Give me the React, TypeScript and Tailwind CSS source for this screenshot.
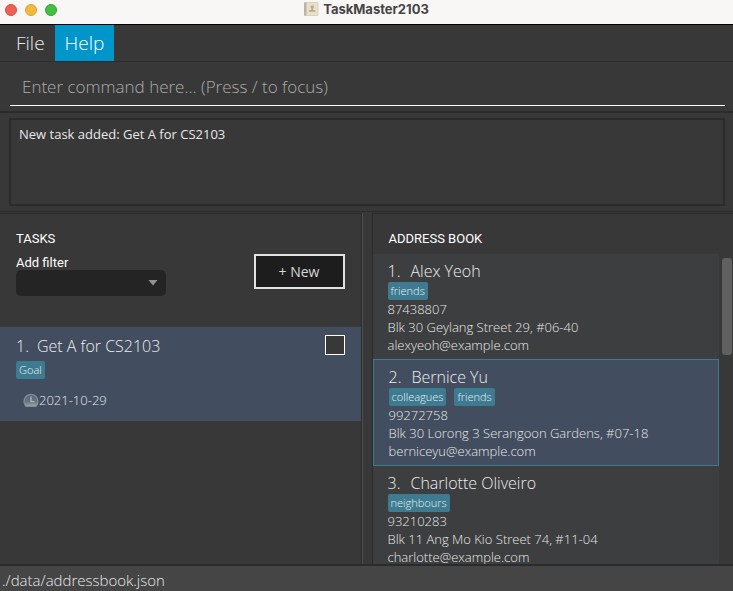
type Person = {
  name: string;
  tags: string[];
  phone: string;
  address: string;
  email: string;
  selected?: boolean;
};

const people: Person[] = [
  {
    name: 'Alex Yeoh',
    tags: ['friends'],
    phone: '87438807',
    address: 'Blk 30 Geylang Street 29, #06-40',
    email: 'alexyeoh@example.com',
  },
  {
    name: 'Bernice Yu',
    tags: ['colleagues', 'friends'],
    phone: '99272758',
    address: 'Blk 30 Lorong 3 Serangoon Gardens, #07-18',
    email: 'berniceyu@example.com',
    selected: true,
  },
  {
    name: 'Charlotte Oliveiro',
    tags: ['neighbours'],
    phone: '93210283',
    address: 'Blk 11 Ang Mo Kio Street 74, #11-04',
    email: 'charlotte@example.com',
  },
];

function Tag({ label }: { label: string }) {
  return (
    <span className="h-[18px] rounded-[2px] bg-[#3e7b91] px-[3px] text-[11px] leading-[18px] text-[#e8f0f2]">
      {label}
    </span>
  );
}

function TitleBar() {
  return (
    <header className="relative flex h-[25px] shrink-0 items-center justify-center border-b border-black bg-[#f8f7f5] pb-1.5">
      <div className="absolute left-[5px] top-1 flex gap-2">
        <span className="size-3 rounded-full border border-[#d64c43] bg-[#ee5f56]" />
        <span className="size-3 rounded-full border border-[#d9a02f] bg-[#f2b93c]" />
        <span className="size-3 rounded-full border border-[#35a233] bg-[#45bf43]" />
      </div>
      <h1 className="flex items-center gap-1 font-['Inter',sans-serif] text-[13px] leading-5 font-bold text-[#454545]">
        <svg width="15" height="14" viewBox="0 0 15 14" aria-hidden="true">
          <rect x="0.5" y="0.5" width="13.500" height="13" rx="0.8" fill="#ecdfc4" stroke="#d8d0c2" />
          <rect x="0" y="0.5" width="2.500" height="13" fill="#b9b4ab" />
          <circle cx="8.200" cy="4.900" r="1.700" fill="#b3aa9d" />
          <path d="M7.400 6h1.600v1.700l2.400.6v1.500H5V8.300l2.400-.6z" fill="#b3aa9d" />
        </svg>
        TaskMaster2103
      </h1>
    </header>
  );
}

function PersonCard({ person, index }: { person: Person; index: number }) {
  return (
    <li
      className={
        person.selected
          ? 'border border-[#3e7b91] bg-[#424d5f] px-[15px] pt-1.5 pb-[5px]'
          : 'bg-[#3c3e3f] px-[15px] pt-1.5 pb-[5px]'
      }
    >
      <h3 className="flex gap-2.5 text-base leading-[22px] text-[#eeeeee]">
        <span>{index}.</span>
        <span>{person.name}</span>
      </h3>
      <div className="flex gap-2">
        {person.tags.map((tag) => (
          <Tag key={tag} label={tag} />
        ))}
      </div>
      <p>{person.phone}</p>
      <p>{person.address}</p>
      <p>{person.email}</p>
    </li>
  );
}

function TaskPanel() {
  return (
    <section className="flex min-w-0 flex-1 flex-col border-t border-r border-[#2b2b2b]">
      <div className="flex h-[113px] items-start justify-between pt-4 pr-4 pl-4">
        <div className="flex flex-col font-['Roboto',sans-serif] text-[13px] font-normal text-white">
          <h2 className="leading-[18px]">TASKS</h2>
          <label htmlFor="filter" className="mt-2 leading-[14px]">
            Add filter
          </label>
          <div className="relative">
            <select
              id="filter"
              defaultValue=""
              className="block h-[26px] w-[150px] appearance-none rounded-[5px] bg-[#242424] px-2 text-white"
            >
              <option value="" />
              <option value="done">Done</option>
            </select>
            <svg
              className="pointer-events-none absolute top-2.5 right-2"
              width="10"
              height="6"
              viewBox="0 0 10 6"
              aria-hidden="true"
            >
              <path d="M0.500 0h9L5 5.500z" fill="#929292" />
            </svg>
          </div>
        </div>
        <button
          type="button"
          className="mt-6 h-[35px] w-[91px] border-2 border-[#e2e2e2] bg-[#1d1d1d] text-sm font-normal text-[#d8d8d8]"
        >
          + New
        </button>
      </div>
      <ul>
        <li className="flex items-start justify-between bg-[#424d5f] px-4 pt-2 pb-3">
          <div>
            <h3 className="flex gap-2 text-base leading-[22px] text-[#eeeeee]">
              <span>1.</span>
              <label htmlFor="task-1">Get A for CS2103</label>
            </h3>
            <div className="mt-1 flex">
              <Tag label="Goal" />
            </div>
            <p className="mt-3 flex items-center pl-[7px]">
              <svg width="16" height="16" viewBox="0 0 16 16" aria-hidden="true">
                <defs>
                  <linearGradient id="clock-face" x1="0" y1="0" x2="0" y2="1">
                    <stop offset="0" stopColor="#5a6472" />
                    <stop offset="0.6" stopColor="#69727f" />
                    <stop offset="1" stopColor="#a0a6ae" />
                  </linearGradient>
                </defs>
                <path
                  d="M3 14.300A7 7 0 1 1 13 14.300Z"
                  fill="url(#clock-face)"
                  stroke="#858d98"
                  strokeWidth="1.300"
                />
                <path d="M8 4.500V9.500H11.500" fill="none" stroke="#b4bac2" strokeWidth="1.200" />
              </svg>
              2021-10-29
            </p>
          </div>
          <input
            id="task-1"
            type="checkbox"
            className="size-5 appearance-none border border-white bg-[#383838]"
          />
        </li>
      </ul>
    </section>
  );
}

function AddressPanel() {
  return (
    <section className="flex min-w-0 flex-1 flex-col border-t border-l border-[#2b2b2b]">
      <h2 className="px-4 pt-4 pb-1.5 font-['Roboto',sans-serif] text-[13px] leading-[18px] font-normal text-white">
        ADDRESS BOOK
      </h2>
      <div className="flex min-h-0 flex-1">
        <ul className="min-w-0 flex-1 overflow-y-auto [scrollbar-width:none]">
          {people.map((person, i) => (
            <PersonCard key={person.name} person={person} index={i + 1} />
          ))}
        </ul>
        <div className="w-3.5 pt-1 pr-px pl-[3px]">
          <div className="h-[97px] rounded-[3px] bg-[#606060]" />
        </div>
      </div>
    </section>
  );
}

export default function App() {
  return (
    <div className="flex h-screen flex-col overflow-hidden bg-[#383838] font-['Open_Sans',sans-serif] text-[13px] leading-[18px] font-light text-[#e8e8e8]">
      <TitleBar />
      <nav className="flex h-[37px] shrink-0 border-b border-[#2b2b2b] text-[19px]">
        <button type="button" className="pr-2.5 pl-4 text-[#e8e8e8]">
          File
        </button>
        <button type="button" className="bg-[#0096c9] px-2.5 text-white">
          Help
        </button>
      </nav>
      <div className="shrink-0 border-b-2 border-[#2b2b2b] pt-1.5 pr-2 pb-[5px] pl-2.5">
        <input
          type="text"
          aria-label="Command"
          placeholder="Enter command here... (Press / to focus)"
          className="block h-[38px] w-full border-b border-white bg-transparent px-3 text-[17px] text-white outline-none placeholder:text-[#acacac]"
        />
      </div>
      <div className="shrink-0 border-b border-[#2b2b2b] py-[5px] pr-2 pl-[9px]">
        <textarea
          readOnly
          aria-label="Result"
          defaultValue="New task added: Get A for CS2103"
          className="block h-[88px] w-full resize-none border-2 border-[#2b2b2b] bg-transparent px-2 py-[5px] font-normal text-[#e8e8e8] outline-none"
        />
      </div>
      <main className="mt-px flex min-h-0 flex-1">
        <TaskPanel />
        <div className="w-2.5 border-l border-[#505050]" />
        <AddressPanel />
      </main>
      <footer className="h-[27px] shrink-0 border-t-2 border-[#2b2b2b] bg-[#454545] px-0.5 text-[15px] leading-7">
        ./data/addressbook.json
      </footer>
    </div>
  );
}
